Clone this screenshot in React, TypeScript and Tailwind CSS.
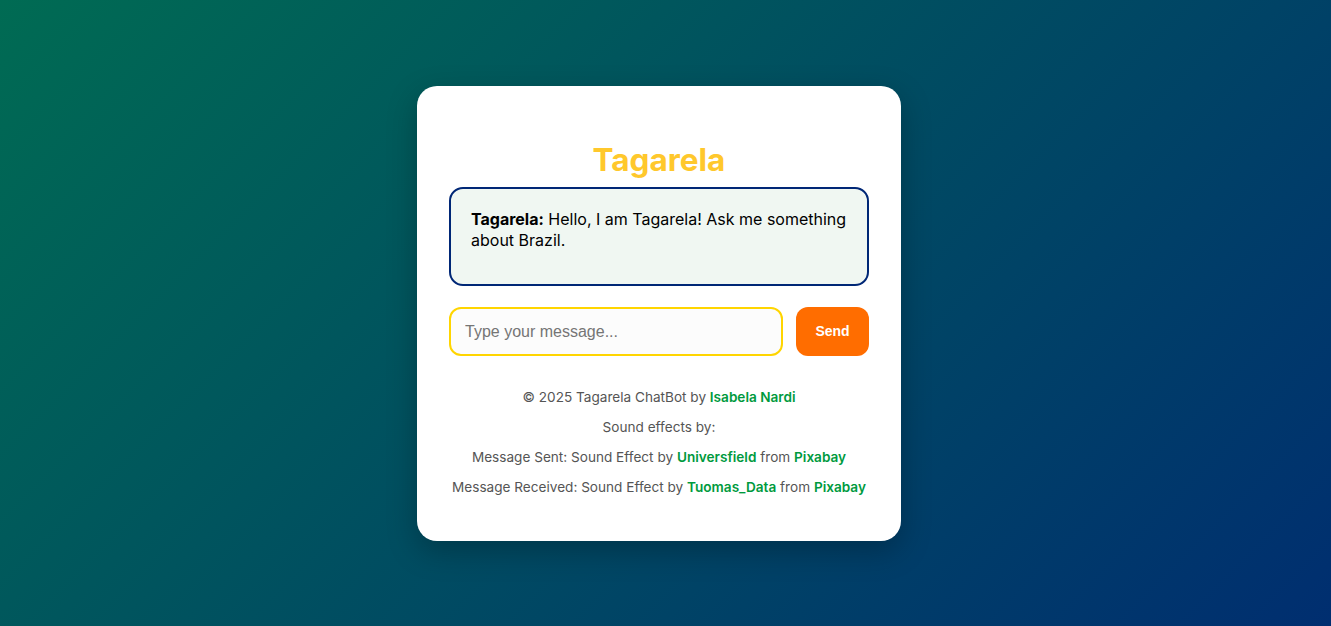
export default function App() {
  const link = "font-semibold text-[#009a3e]";

  return (
    <div className="min-h-screen w-full flex items-center justify-center pr-[13px] bg-[linear-gradient(135deg,#006b53_0%,#002e70_100%)] font-['Inter',sans-serif]">
      <div className="w-[484px] bg-white rounded-[20px] px-8 pt-[54px] pb-[44px] shadow-[0_10px_30px_rgba(0,0,0,0.25)]">
        <h1 className="text-center text-[31.5px] leading-[40px] font-bold text-[#ffc82c] mb-[7px]">Tagarela</h1>

        <div className="h-[99px] border-2 border-[#002776] rounded-[14px] bg-[#f0f7f2] px-5 pt-[20px] text-[16px] leading-[21px] text-black">
          <strong>Tagarela:</strong> Hello, I am Tagarela! Ask me something about Brazil.
        </div>

        <div className="flex gap-[13px] mt-[21px]">
          <input
            type="text"
            placeholder="Type your message..."
            className="flex-1 h-[49px] border-2 border-[#ffd500] rounded-[12px] bg-[#fcfcfc] px-[14px] pt-[1px] text-[16px] font-['Liberation_Sans',Arial,sans-serif] placeholder:text-[#757575] outline-none"
          />
          <button className="w-[73px] h-[49px] rounded-[12px] bg-[#ff6d00] text-white text-[14px] font-bold font-['Liberation_Sans',Arial,sans-serif]">
            Send
          </button>
        </div>

        <div className="mt-[32px] text-center text-[13.6px] leading-[19px] text-[#555] flex flex-col gap-[11px]">
          <p>
            © 2025 Tagarela ChatBot by <span className={link}>Isabela Nardi</span>
          </p>
          <p>Sound effects by:</p>
          <p>
            Message Sent: Sound Effect by <span className={link}>Universfield</span> from{" "}
            <span className={link}>Pixabay</span>
          </p>
          <p>
            Message Received: Sound Effect by <span className={link}>Tuomas_Data</span> from{" "}
            <span className={link}>Pixabay</span>
          </p>
        </div>
      </div>
    </div>
  );
}
